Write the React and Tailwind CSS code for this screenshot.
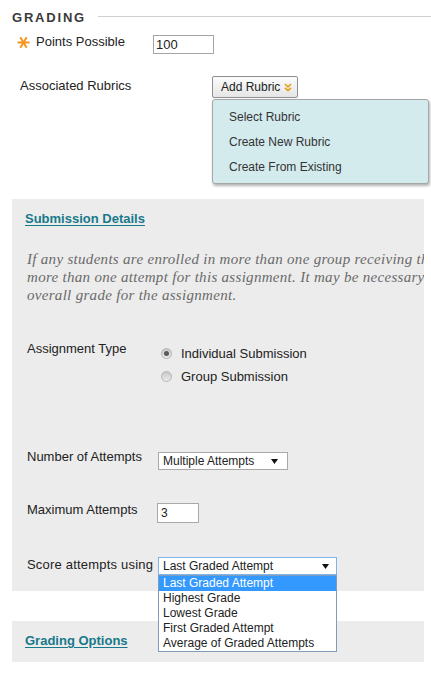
import React from "react";

function Asterisk() {
  return (
    <svg width="13" height="13" viewBox="0 0 13 13" className="block shrink-0">
      <g stroke="#f7941d" strokeWidth="2" strokeLinecap="butt">
        <line x1="0.5" y1="6.5" x2="12.5" y2="6.5" />
        <line x1="3.3" y1="1.3" x2="9.7" y2="11.7" />
        <line x1="9.7" y1="1.3" x2="3.3" y2="11.7" />
      </g>
    </svg>
  );
}

function DoubleChevron() {
  return (
    <svg width="8" height="9" viewBox="0 0 8 9" className="block shrink-0">
      <g fill="none" stroke="#e3a21a" strokeWidth="1.6">
        <polyline points="1,1 4,3.8 7,1" />
        <polyline points="1,4.8 4,7.6 7,4.8" />
      </g>
    </svg>
  );
}

function Arrow() {
  return (
    <svg width="7" height="5" viewBox="0 0 7 5" className="block shrink-0">
      <polygon points="0,0 7,0 3.5,5" fill="#111" />
    </svg>
  );
}

function Radio({ checked }) {
  return (
    <span className="w-[11px] h-[11px] rounded-full border border-[#b4b4b4] bg-gradient-to-b from-[#c8c8c8] to-[#ececec] flex items-center justify-center shrink-0">
      {checked ? <span className="w-[5px] h-[5px] rounded-full bg-[#5a5a5a]" /> : null}
    </span>
  );
}

export default function App() {
  const font = { fontFamily: '"Liberation Sans", Arial, sans-serif' };
  return (
    <div className="relative w-[431px] h-[680px] bg-white overflow-hidden text-[#222] leading-[15px]" style={font}>
      {/* Header */}
      <div className="flex items-start pt-[10px] pl-[12px]">
        <div className="text-[13px] leading-[16px] font-bold tracking-[1.8px] text-[#3a3a3a]">GRADING</div>
        <div className="flex-1 h-px bg-[#cfcfcf] mt-[6px] ml-[12px]" />
      </div>

      {/* Points Possible */}
      <div className="flex items-start mt-[8px] pl-[17px]">
        <div className="flex items-start w-[136px]">
          <div className="mt-[2px]"><Asterisk /></div>
          <div className="ml-[6px] text-[13px] leading-[15px]">Points Possible</div>
        </div>
        <div className="mt-[1px] w-[61px] h-[19px] border border-[#a5a5a5] bg-white text-[13px] leading-[17px] pl-[2px]">100</div>
      </div>

      {/* Associated Rubrics */}
      <div className="relative flex items-start mt-[22px] pl-[20px]">
        <div className="w-[192px] mt-[2px] text-[13px] leading-[15px]">Associated Rubrics</div>
        <div className="relative">
          <div className="h-[22px] w-[86px] flex items-center gap-[4px] pl-[8px] border border-[#8f8f8f] rounded-[2px] bg-gradient-to-b from-[#fbfbfb] to-[#e6e6e6] text-[12px]">
            <span>Add Rubric</span>
            <DoubleChevron />
          </div>
          <div className="absolute z-10 left-0 top-[23px] w-[217px] h-[85px] bg-[#d4ebee] border border-[#a6a6a6] rounded-[3px] shadow-[1px_2px_3px_rgba(0,0,0,0.3)] pt-[5px] pl-[16px] text-[12px] text-[#333]">
            <div className="h-[25px] leading-[25px]">Select Rubric</div>
            <div className="h-[25px] leading-[25px]">Create New Rubric</div>
            <div className="h-[25px] leading-[25px]">Create From Existing</div>
          </div>
        </div>
      </div>

      {/* Submission Details panel */}
      <div className="relative mt-[101px] ml-[12px] w-[412px] bg-[#ececec] pt-[12px] pb-[16px]">
        <div className="pl-[13px] flex">
          <div className="text-[13px] leading-[15px] font-bold text-[#17798b] underline underline-offset-[2px]">Submission Details</div>
        </div>
        <div
          className="mt-[24px] pl-[15px] overflow-hidden text-[15px] leading-[18px] italic tracking-[0.3px] text-[#6a6a6a] whitespace-nowrap"
          style={{ fontFamily: '"Liberation Serif", "Times New Roman", serif' }}
        >
          <div>If any students are enrolled in more than one group receiving this assignment, they may have</div>
          <div>more than one attempt for this assignment. It may be necessary to select how attempts affect the</div>
          <div>overall grade for the assignment.</div>
        </div>

        {/* Assignment Type */}
        <div className="flex items-start mt-[37px] pl-[15px]">
          <div className="w-[134px] text-[13px] leading-[15px]">Assignment Type</div>
          <div className="flex flex-col text-[13px]">
            <div className="h-[23px] flex items-center gap-[9px] mt-[1px]">
              <Radio checked />
              <span>Individual Submission</span>
            </div>
            <div className="h-[23px] flex items-center gap-[9px]">
              <Radio />
              <span>Group Submission</span>
            </div>
          </div>
        </div>

        {/* Number of Attempts */}
        <div className="flex items-start mt-[61px] pl-[15px]">
          <div className="w-[131px] text-[13px] leading-[15px]">Number of Attempts</div>
          <div className="mt-[3px] w-[130px] h-[18px] border border-[#a9a9a9] bg-white flex items-center justify-between pl-[4px] pr-[9px] text-[12px]">
            <span>Multiple Attempts</span>
            <Arrow />
          </div>
        </div>

        {/* Maximum Attempts */}
        <div className="flex items-start mt-[32px] pl-[15px]">
          <div className="w-[130px] text-[13px] leading-[15px]">Maximum Attempts</div>
          <div className="mt-[1px] w-[42px] h-[20px] border border-[#a9a9a9] bg-white text-[12px] leading-[18px] pl-[3px]">3</div>
        </div>

        {/* Score attempts using */}
        <div className="flex items-start mt-[34px] pl-[15px]">
          <div className="w-[131px] text-[13px] leading-[15px] tracking-[0.2px]">Score attempts using</div>
          <div className="relative">
            <div className="w-[179px] h-[18px] border border-[#7eb4ea] bg-white flex items-center justify-between pl-[4px] pr-[7px] text-[12px]">
              <span>Last Graded Attempt</span>
              <Arrow />
            </div>
            <div className="absolute z-10 left-0 top-[18px] w-[179px] border border-[#7f9db9] bg-white text-[12px] leading-[15px]">
              <div className="bg-[#3399ff] text-white pl-[4px]">Last Graded Attempt</div>
              <div className="pl-[4px]">Highest Grade</div>
              <div className="pl-[4px]">Lowest Grade</div>
              <div className="pl-[4px]">First Graded Attempt</div>
              <div className="pl-[4px]">Average of Graded Attempts</div>
            </div>
          </div>
        </div>
      </div>

      {/* Grading Options panel */}
      <div className="mt-[30px] ml-[12px] w-[412px] h-[41px] bg-[#ececec] pt-[12px] pl-[13px] flex items-start">
        <div className="text-[13px] leading-[15px] font-bold text-[#17798b] underline underline-offset-[2px]">Grading Options</div>
      </div>
    </div>
  );
}
